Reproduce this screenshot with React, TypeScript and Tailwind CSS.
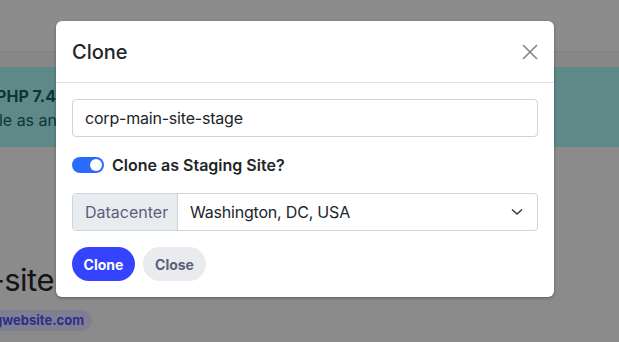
import React from "react";

export default function App() {
  const font = { fontFamily: "Inter, 'Noto Sans', sans-serif" };
  return (
    <div className="relative w-[619px] h-[342px] overflow-hidden bg-[#8b8b8b]" style={font}>
      {/* background page (dimmed) */}
      <div className="h-[52px] bg-[#8c8c8c] border-b border-[#808080]" />
      <div className="h-[15px] bg-[#878787]" />
      <div className="h-[80px] bg-[#5f8989] flex flex-col justify-center pt-[2px]">
        <div className="w-[56px] overflow-hidden flex justify-end">
          <span className="whitespace-nowrap text-[16px] font-bold leading-[24px] text-[#0d3536]">
            Running PHP 7.4
          </span>
        </div>
        <div className="w-[57px] overflow-hidden flex justify-end">
          <span className="whitespace-nowrap text-[16px] leading-[24px] text-[#0d3536]">
            available as an
          </span>
        </div>
      </div>
      <div className="mt-[113px] w-[54px] overflow-hidden flex justify-end">
        <span className="whitespace-nowrap text-[31px] leading-[40px] font-normal tracking-[-0.5px] text-[#141414]">
          corp-main-site
        </span>
      </div>
      <div className="mt-[10px] w-[92px] overflow-hidden flex justify-end">
        <span className="whitespace-nowrap rounded-full bg-[#807f91] text-[#2a2f8c] text-[13px] font-bold leading-[21px] pl-[8px] pr-[8px]">
          corp-main-site.stagingwebsite.com
        </span>
      </div>

      {/* modal */}
      <div className="absolute left-[56px] top-[21px] w-[498px] bg-white rounded-[6px] shadow-[0_1px_3px_rgba(0,0,0,0.35)]">
        <div className="h-[62px] flex items-center justify-between px-[16px] border-b border-[#dee2e6]">
          <span className="text-[20px] font-medium leading-[30px] text-[#212529]">Clone</span>
          <svg width="16" height="16" viewBox="0 0 16 16">
            <path d="M1 1 L15 15 M15 1 L1 15" stroke="#858585" strokeWidth="1.6" fill="none" />
          </svg>
        </div>
        <div className="p-[16px] flex flex-col">
          <div className="h-[38px] flex items-center border border-[#ced4da] rounded-[4px] px-[12px] text-[16px] tracking-[-0.2px] text-[#212529]">
            corp-main-site-stage
          </div>
          <div className="mt-[16px] h-[24px] flex items-center gap-[8px]">
            <div className="w-[32px] h-[16px] rounded-full bg-[#2a6bfb] flex items-center justify-end pr-[2px]">
              <div className="w-[12px] h-[12px] rounded-full bg-white" />
            </div>
            <span className="text-[16px] font-semibold text-[#212529]">Clone as Staging Site?</span>
          </div>
          <div className="mt-[16px] h-[38px] flex border border-[#ced4da] rounded-[4px] overflow-hidden">
            <div className="w-[105px] bg-[#e9ecef] border-r border-[#ced4da] flex items-center px-[12px] text-[16px] text-[#5b5e80]">
              Datacenter
            </div>
            <div className="flex-1 flex items-center justify-between pl-[12px] pr-[14px] text-[16px] tracking-[-0.2px] text-[#212529]">
              <span>Washington, DC, USA</span>
              <svg width="12" height="8" viewBox="0 0 12 8">
                <path d="M1 1.5 L6 6 L11 1.5" stroke="#343a40" strokeWidth="1.6" fill="none" />
              </svg>
            </div>
          </div>
          <div className="mt-[16px] flex gap-[8px]">
            <button className="h-[34px] w-[63px] rounded-full bg-[#3443fe] text-white text-[14px] font-bold">
              Clone
            </button>
            <button className="h-[34px] w-[63px] rounded-full bg-[#e9ebef] text-[#5b5f7c] text-[14px] font-bold">
              Close
            </button>
          </div>
        </div>
      </div>
    </div>
  );
}
